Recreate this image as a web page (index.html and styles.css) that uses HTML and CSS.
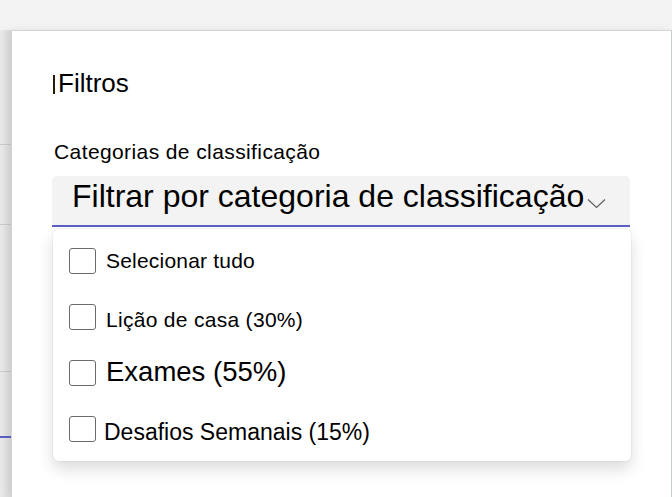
FILE: index.html
```html
<!DOCTYPE html>
<html lang="pt">
<head>
<meta charset="utf-8">
<title>Filtros</title>
<link rel="stylesheet" href="styles.css">
</head>
<body>
<div class="topbar"></div>
<div class="main">
  <div class="rail">
    <div class="rail-seg rail-a"></div>
    <div class="rail-seg rail-b"></div>
    <div class="rail-seg rail-c"></div>
    <div class="rail-seg rail-d"></div>
    <div class="rail-rest"></div>
  </div>
  <div class="panel">
    <h2 class="title"><span class="caret"></span>Filtros</h2>
    <div class="field-label">Categorias de classificação</div>
    <div class="combo">
      <div class="combo-box">
        <span class="combo-text">Filtrar por categoria de classificação</span>
        <svg class="chev" width="19" height="11" viewBox="0 0 19 11" aria-hidden="true"><path d="M1 1.5 L9.5 9.5 L18 1.5" fill="none" stroke="#616161" stroke-width="1.2"/></svg>
      </div>
      <div class="menu">
        <label class="opt opt-1"><span class="box"></span><span class="opt-text">Selecionar tudo</span></label>
        <label class="opt opt-2"><span class="box"></span><span class="opt-text">Lição de casa (30%)</span></label>
        <label class="opt opt-3"><span class="box"></span><span class="opt-text">Exames (55%)</span></label>
        <label class="opt opt-4"><span class="box"></span><span class="opt-text">Desafios Semanais (15%)</span></label>
      </div>
    </div>
  </div>
</div>
</body>
</html>
```
FILE: styles.css
```css
html, body {
  margin: 0;
  padding: 0;
  height: 100%;
  overflow: hidden;
}
body {
  font-family: "Liberation Sans", Arial, sans-serif;
  color: #000;
  background: #f3f3f3;
}
.topbar {
  height: 30px;
  background: #f3f3f3;
}
.main {
  display: flex;
  height: 467px;
}
.rail {
  width: 11px;
  display: flex;
  flex-direction: column;
  background: linear-gradient(to right, #e9e9e9, #dcdcdc);
}
.rail-seg {
  border-bottom: 1px solid #c9c9c9;
}
.rail-a { height: 114px; }
.rail-b { height: 79px; }
.rail-c { height: 146px; }
.rail-d { height: 64px; border-bottom: 2px solid #5b5fc7; }
.rail-rest { flex: 1; }
.panel {
  flex: 1;
  background: #fff;
  border-top: 1px solid #d4d4d4;
  border-left: 1px solid #d4d4d4;
  border-right: 1px solid #c8cfd2;
  box-shadow: -3px 0 8px rgba(0,0,0,0.08);
  padding: 36px 40px 0 40px;
}
.title {
  margin: 0;
  font-size: 26px;
  line-height: 32px;
  font-weight: normal;
  display: flex;
  align-items: center;
}
.caret {
  display: inline-block;
  width: 2px;
  height: 19px;
  background: #2a1a0a;
  margin: 3px 3px 0 1px;
}
.field-label {
  margin-top: 41px;
  font-size: 21px;
  line-height: 24px;
  letter-spacing: 0.4px;
  padding-left: 2px;
}
.combo {
  position: relative;
  margin-top: 12px;
  width: 578px;
}
.combo-box {
  background: #f3f3f3;
  border-radius: 5px 5px 0 0;
  border-bottom: 2px solid #5b5fc7;
  height: 49px;
  padding-left: 20px;
  display: flex;
  align-items: flex-start;
}
.combo-text {
  font-size: 32px;
  line-height: 40px;
  white-space: nowrap;
}
.chev {
  margin: 22px 0 0 3px;
}
.menu {
  position: absolute;
  top: calc(100% + 2px);
  left: 1px;
  width: 578px;
  background: #fff;
  border-radius: 6px;
  box-shadow: 0 8px 16px rgba(0,0,0,0.14), 0 0 2px rgba(0,0,0,0.12);
  padding: 4px 0 4px 0;
  display: flex;
  flex-direction: column;
}
.opt {
  height: 56px;
  display: flex;
  align-items: center;
  padding-left: 16px;
}
.box {
  width: 25px;
  height: 24px;
  border: 1px solid #6b6b6b;
  border-radius: 3px;
  flex: none;
  margin-right: 10px;
}
.opt-text {
  white-space: nowrap;
}
.opt-1 .opt-text { font-size: 21px; line-height: 24px; letter-spacing: 0.2px; }
.opt-2 .opt-text { font-size: 21px; line-height: 25px; letter-spacing: 0.3px; padding-top: 5px; }
.opt-3 .opt-text { font-size: 27.5px; line-height: 33px; padding-bottom: 4px; }
.opt-4 .box { margin-right: 8px; }
.opt-4 .opt-text { font-size: 23px; line-height: 28px; padding-top: 6px; }
```
